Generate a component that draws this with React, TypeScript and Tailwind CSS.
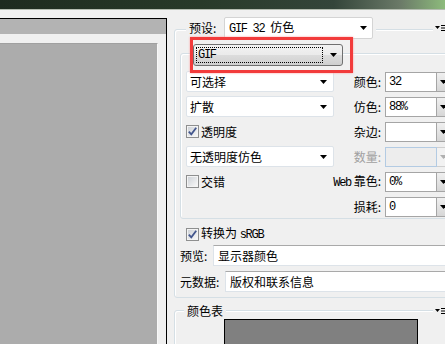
const cjk = "font-['Noto_Sans_CJK_SC',sans-serif]";
const mono = "font-['Liberation_Mono',monospace] text-[12px] tracking-[-1.3px]";

function Caret({ color = "#000" }: { color?: string }) {
  return (
    <svg width="7" height="4" viewBox="0 0 7 4">
      <polygon points="0,0 7,0 3.5,4" fill={color} />
    </svg>
  );
}

function MenuIcon() {
  return (
    <svg width="12" height="8" viewBox="0 0 12 8">
      <polygon points="0,2 5,2 2.5,5" fill="#000" />
      <path d="M6 1.5h6M6 4h6M6 6.5h6" stroke="#000" strokeWidth="1" />
    </svg>
  );
}

function Check({ checked, label }: { checked?: boolean; label: React.ReactNode }) {
  return (
    <div className="flex items-center gap-[2px]">
      <svg width="13" height="13" viewBox="0 0 13 13">
        <defs>
          <linearGradient id="cbg" x1="0" y1="0" x2="1" y2="1">
            <stop offset="0" stopColor="#cfd3d8" />
            <stop offset="1" stopColor="#f7f7f7" />
          </linearGradient>
        </defs>
        <rect x="0.5" y="0.5" width="12" height="12" fill="#f4f4f4" stroke="#8e8f8f" />
        <rect x="2" y="2" width="9" height="9" fill="url(#cbg)" />
        {checked && (
          <path d="M2.8 6.6 L5.3 9.4 L10.2 2.8" fill="none" stroke="#43568d" strokeWidth="1.8" />
        )}
      </svg>
      <span className="leading-none">{label}</span>
    </div>
  );
}

function PSelect({ text }: { text: string }) {
  return (
    <div className="w-[148px] h-[21px] bg-white border border-[#dde3e9] rounded-[2px] flex items-center justify-between pl-[3px] pr-[6px]">
      <span className="leading-none">{text}</span>
      <Caret />
    </div>
  );
}

type Row = {
  left: React.ReactNode;
  label: React.ReactNode;
  value: string;
  disabled?: boolean;
};

const rows: Row[] = [
  { left: <PSelect text="可选择" />, label: "颜色:", value: "32" },
  { left: <PSelect text="扩散" />, label: "仿色:", value: "88%" },
  { left: <Check checked label="透明度" />, label: "杂边:", value: "" },
  { left: <PSelect text="无透明度仿色" />, label: "数量:", value: "", disabled: true },
  {
    left: <Check label="交错" />,
    label: (
      <span>
        <span className={mono}>Web</span>&nbsp;靠色:
      </span>
    ),
    value: "0%",
  },
  { left: null, label: "损耗:", value: "0" },
];

function OptionRow({ row }: { row: Row }) {
  return (
    <div className="h-[21px] flex items-center">
      <div className="shrink-0">{row.left}</div>
      <div
        className={`flex-1 flex justify-end items-center pr-[4px] whitespace-nowrap leading-none ${
          row.disabled ? "text-[#a0a0a0]" : ""
        }`}
      >
        {row.label}
      </div>
      <div
        className={`w-[52px] h-[20px] border flex items-center pl-[3px] ${
          row.disabled ? "border-[#b3cbe3] bg-[#ededed]" : "border-[#a5a5a5] bg-white"
        }`}
      >
        <span className={mono}>{row.value}</span>
      </div>
      <div
        className={`w-[17px] h-[20px] border border-l-0 flex items-center pl-[3px] ${
          row.disabled
            ? "border-[#cfcfcf] bg-[#f2f2f2]"
            : "border-[#a5a5a5] bg-[linear-gradient(#f0f0f0,#d6d6d6)]"
        }`}
      >
        <Caret color={row.disabled ? "#b0b0b0" : "#000"} />
      </div>
    </div>
  );
}

function LeftPane() {
  return (
    <div className="w-[167px] shrink-0 pt-[8px] flex flex-col">
      <div className="flex-1 flex flex-col border-t border-r border-black">
        <div className="h-[15px] bg-[#b3b3b3]" />
        <div className="h-[9px]" />
        <div className="flex-1 mr-[8px] bg-[#acacac] border-t border-t-[#a0a0a0] border-r border-r-[#f8f8f8]" />
      </div>
    </div>
  );
}

function RightPane() {
  return (
    <div className="w-[320px] shrink-0 pl-[7px] pt-[19px] flex flex-col">
      {/* 预设 group */}
      <div className="w-[300px] border border-[#d5dfe5] rounded-[3px] shadow-[inset_1px_1px_0_#fff] pb-[5px]">
        <div className="-mt-[13px] h-[22px] w-[272px] flex items-center">
          <div className="ml-[11px] pl-[3px] pr-[3px] h-full flex items-center bg-[#f0f0f0]">
            <span className="w-[35px] leading-none">预设:</span>
            <div className="w-[149px] h-[22px] bg-white border border-[#d4d4d4] rounded-[2px] flex items-center justify-between pl-[4px] pr-[5px]">
              <span className="leading-none whitespace-pre">
                <span className={mono}>GIF 32 </span>仿色
              </span>
              <Caret />
            </div>
          </div>
          <div className="flex-1" />
          <div className="bg-[#f0f0f0] pl-[2px] flex items-center">
            <MenuIcon />
          </div>
        </div>

        {/* format group */}
        <div className="ml-[5px] mt-[14px] w-[285px] border border-[#d5dfe5] rounded-[3px] shadow-[inset_1px_1px_0_#fff] pl-[5px] pb-[1px]">
          <div className="relative -mt-[10px] ml-[7px] w-[150px] h-[22px]">
            <div className="w-full h-full rounded-[3px] border border-[#707070] bg-[linear-gradient(#f2f2f2,#ebebeb_50%,#dddddd_50%,#cfcfcf)] flex items-center pl-[2px] pr-[5px]">
              <div className="w-[127px] h-[16px] border border-dotted border-black flex items-center pl-[1px]">
                <span className={mono}>GIF</span>
              </div>
              <div className="flex-1 flex justify-end">
                <Caret />
              </div>
            </div>
            <div className="absolute -top-[7px] -bottom-[7px] -left-[3px] -right-[10px] border-[3px] border-[#f23b3b] shadow-[0_0_2px_#ff9c9c] pointer-events-none" />
          </div>
          <div className="mt-[5px] w-[268px] flex flex-col gap-[4px]">
            {rows.map((r, i) => (
              <OptionRow key={i} row={r} />
            ))}
          </div>
        </div>

        <div className="mt-[8px] ml-[11px] h-[14px] flex items-center">
          <Check
            checked
            label={
              <span className="whitespace-pre">
                转换为 <span className={mono}>sRGB</span>
              </span>
            }
          />
        </div>
        <div className="mt-[4px] pl-[5px] h-[21px] flex items-center">
          <span className="w-[33px] leading-none">预览:</span>
          <div className="flex-1 h-full bg-white border border-[#dde3e9] border-t-[#a9a9a9] flex items-center pl-[4px]">
            <span className="leading-none">显示器颜色</span>
          </div>
        </div>
        <div className="mt-[5px] pl-[5px] h-[21px] flex items-center">
          <span className="w-[45px] leading-none">元数据:</span>
          <div className="flex-1 h-full bg-white border border-[#dde3e9] border-t-[#a9a9a9] flex items-center pl-[4px]">
            <span className="leading-none">版权和联系信息</span>
          </div>
        </div>
      </div>

      {/* 颜色表 group */}
      <div className="mt-[12px] w-[300px] h-[60px] shrink-0 border border-[#d5dfe5] rounded-[3px] shadow-[inset_1px_1px_0_#fff]">
        <div className="-mt-[8px] h-[16px] w-[272px] flex items-center">
          <span className="ml-[9px] px-[3px] bg-[#f0f0f0] leading-none">颜色表</span>
          <div className="flex-1" />
          <div className="bg-[#f0f0f0] pl-[2px] flex items-center">
            <MenuIcon />
          </div>
        </div>
        <div className="ml-[49px] w-[194px] h-[40px] bg-[#808080] border border-black" />
      </div>
    </div>
  );
}

export default function App() {
  return (
    <div className={`w-[445px] h-[344px] overflow-hidden bg-[#f0f0f0] flex flex-col ${cjk} text-[12px] text-black`}>
      <div className="h-[9px] shrink-0 bg-[linear-gradient(to_right,#1e2b1f,#283a29_45%,#34453a_75%,#6b7a68_90%,#8dbb7c)]" />
      <div className="h-[1px] shrink-0 bg-[#b4bcb0]" />
      <div className="flex flex-1 min-h-0">
        <LeftPane />
        <RightPane />
      </div>
    </div>
  );
}
